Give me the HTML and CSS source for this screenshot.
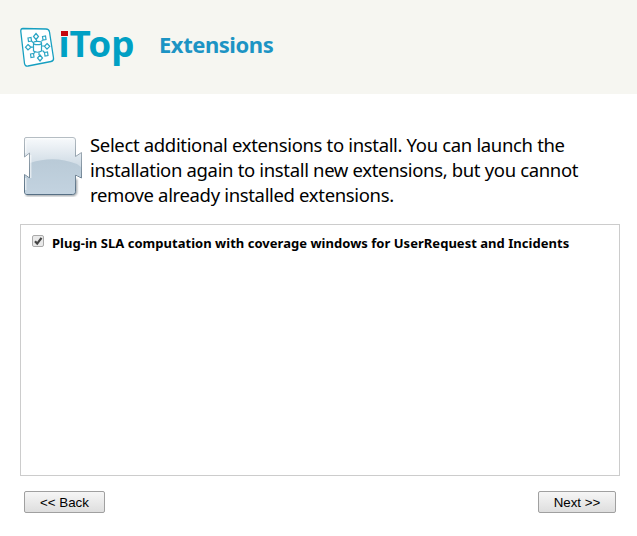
FILE: index.html
```
<!DOCTYPE html>
<html lang="en">
<head>
  <meta charset="UTF-8">
  <meta name="viewport" content="width=device-width, initial-scale=1.0">
  <title>Extensions</title>
  <link rel="stylesheet" href="styles.css">
</head>
<body>
  <div class="header">
    <svg class="logo" width="116" height="52" viewBox="0 0 116 52">
      <!-- tilted card with the star of nodes -->
      <g transform="translate(0 1)">
        <path d="M3 4.500 L26 5 Q29 5 29.500 8 L33.500 34 Q34 37 31 37.500 L8 42 Q5 42.500 4.500 39.500 L0.800 7.500 Q0.500 4.500 3 4.500 Z" fill="#fff" stroke="#169fc0" stroke-width="1.300"/>
        <g fill="none" stroke="#2ba5c4" stroke-width="1.200">
          <path d="M13.500 19 V27 Q17.500 29.500 21.500 27 V19"/>
          <ellipse cx="17.500" cy="19" rx="4" ry="1.700"/>
          <path d="M16 9.500 l2.500 3 -2.500 3 -2.500 -3z M20 31 l2.500 3 -2.500 3 -2.500 -3z M8 20.500 l3 2.700 -3 2.700 -2.500 -2.700z M27 19.500 l2.800 2.800 -2.800 2.800 -2.500 -2.800z"/>
          <path d="M8 14 l3 -0.500 0.500 3.500 -3 0.500z M22.500 12.500 l3 -0.500 0.500 3.500 -3 0.500z M10.500 30 l3 -0.500 0.500 3.500 -3 0.500z M24.500 28.500 l3 -0.500 0.500 3.500 -3 0.500z"/>
          <path d="M16.500 15.500 V17.500 M19 28.500 V31 M11 23.200 H13 M22 22 H24.500 M11.500 17 l1.500 1.500 M14 29.500 l1 -1.500 M22.500 16 l-1 1.500 M24.500 28.500 l-2 -2"/>
        </g>
      </g>
      <text class="logo-text" x="38.500" y="34" textLength="76" lengthAdjust="spacingAndGlyphs">iTop</text>
      <rect x="40" y="5" width="9" height="9" fill="#f6f6f1"/>
      <rect x="41" y="8" width="7" height="5" fill="#c4080c"/>
    </svg>
    <h1>Extensions</h1>
  </div>

  <form class="wizard">
    <div class="intro">
      <svg class="puzzle" width="64" height="66" viewBox="0 0 64 66">
        <defs>
          <linearGradient id="body" x1="0" y1="0" x2="0" y2="1">
            <stop offset="0" stop-color="#f8fafc"/>
            <stop offset="0.45" stop-color="#d3dee7"/>
            <stop offset="1" stop-color="#bccddb"/>
          </linearGradient>
          <linearGradient id="edge" x1="0" y1="0" x2="0" y2="1">
            <stop offset="0" stop-color="#b5bdc3"/>
            <stop offset="1" stop-color="#566f84"/>
          </linearGradient>
          <linearGradient id="wave" x1="0" y1="0" x2="0" y2="1">
            <stop offset="0" stop-color="#b9cad7"/>
            <stop offset="1" stop-color="#c3d3e0"/>
          </linearGradient>
          <filter id="soft" x="-10%" y="-10%" width="120%" height="120%">
            <feGaussianBlur stdDeviation="0.8"/>
          </filter>
        </defs>
        <path d="M6 62 H54 L56 60 V46" fill="none" stroke="#59636b" stroke-opacity="0.7" stroke-width="2" filter="url(#soft)"/>
        <path d="M6 4.500 H53 Q55.500 4.500 55.500 7 V23.500 L61.500 19.500 V45 L55.500 42 V58.500 Q55.500 61.500 52.500 61.500 H7 Q4.500 61.500 4.500 59 V41.500 L9.500 45 V20 L4.500 24 V6 Q4.500 4.500 6 4.500 Z" fill="url(#body)" stroke="url(#edge)"/>
        <path d="M10 30 Q34 22 57 31 L61 34 V44 L55 41 V58 Q55 61 52 61 H7 Q5 61 5 59 V42.500 L10 46 Z" fill="url(#wave)"/>
        <path d="M7 5.800 H53 M5.800 8 V20 M10.800 22 V45 M5.800 45 V57" fill="none" stroke="#fff" stroke-opacity="0.85"/>
      </svg>
      <p>Select additional extensions to install. You can launch the<br>installation again to install new extensions, but you cannot<br>remove already installed extensions.</p>
    </div>

    <div class="choices">
      <label class="choice">
        <svg class="check" width="13" height="13" viewBox="0 0 13 13">
          <rect x="0.500" y="0.500" width="11" height="11" rx="1.500" fill="#e9e9e9" stroke="#aaa"/>
          <path d="M3 6.200 L5.200 8.600 L9.500 2.800" fill="none" stroke="#444" stroke-width="2.200"/>
        </svg>
        <b>Plug-in SLA computation with coverage windows for UserRequest and Incidents</b>
      </label>
    </div>

    <div class="buttons">
      <button type="button" class="back">&lt;&lt; Back</button>
      <button type="button" class="next">Next &gt;&gt;</button>
    </div>
  </form>
</body>
</html>
```
FILE: styles.css
```
body {
  margin: 0;
  background-color: #fff;
  color: #000;
  font-family: Tahoma, "Noto Sans", sans-serif;
}

.header {
  display: flex;
  height: 94px;
  padding-left: 20px;
  background-color: #f6f6f1;
}

.logo {
  margin-top: 23px;
  overflow: visible;
}

.logo-text {
  font-size: 36px;
  font-weight: bold;
  fill: #00a0c4;
}

.header h1 {
  margin: 31px 0 0 23px;
  font-size: 22px;
  line-height: 26px;
  letter-spacing: -0.45px;
  color: #1c94c4;
}

.wizard {
  width: 600px;
  margin: 38px 0 0 20px;
}

.intro {
  display: flex;
  height: 92px;
}

.puzzle {
  flex: none;
  margin-top: 1px;
}

.intro p {
  margin: 0 0 0 6px;
  font-size: 18.5px;
  line-height: 25px;
  letter-spacing: -0.34px;
  white-space: nowrap;
}

.choices {
  box-sizing: border-box;
  height: 252px;
  padding: 9px 11px;
  border: 1px solid #ccc;
}

.choice {
  display: flex;
  font-size: 13px;
  line-height: 18px;
  letter-spacing: 0.03px;
  white-space: nowrap;
}

.check {
  margin: 1px 7px 0 0;
}

.buttons {
  display: flex;
  justify-content: space-between;
  padding: 15px 4px 0;
}

.buttons button {
  height: 22px;
  padding: 0;
  border: 1px solid #a0a0a0;
  border-radius: 2px;
  background: linear-gradient(#f6f6f6, #dedede);
  color: #000;
  font-family: Arial, "Liberation Sans", sans-serif;
  font-size: 13.33px;
}

.buttons .back {
  width: 81px;
}

.buttons .next {
  width: 78px;
}
```
